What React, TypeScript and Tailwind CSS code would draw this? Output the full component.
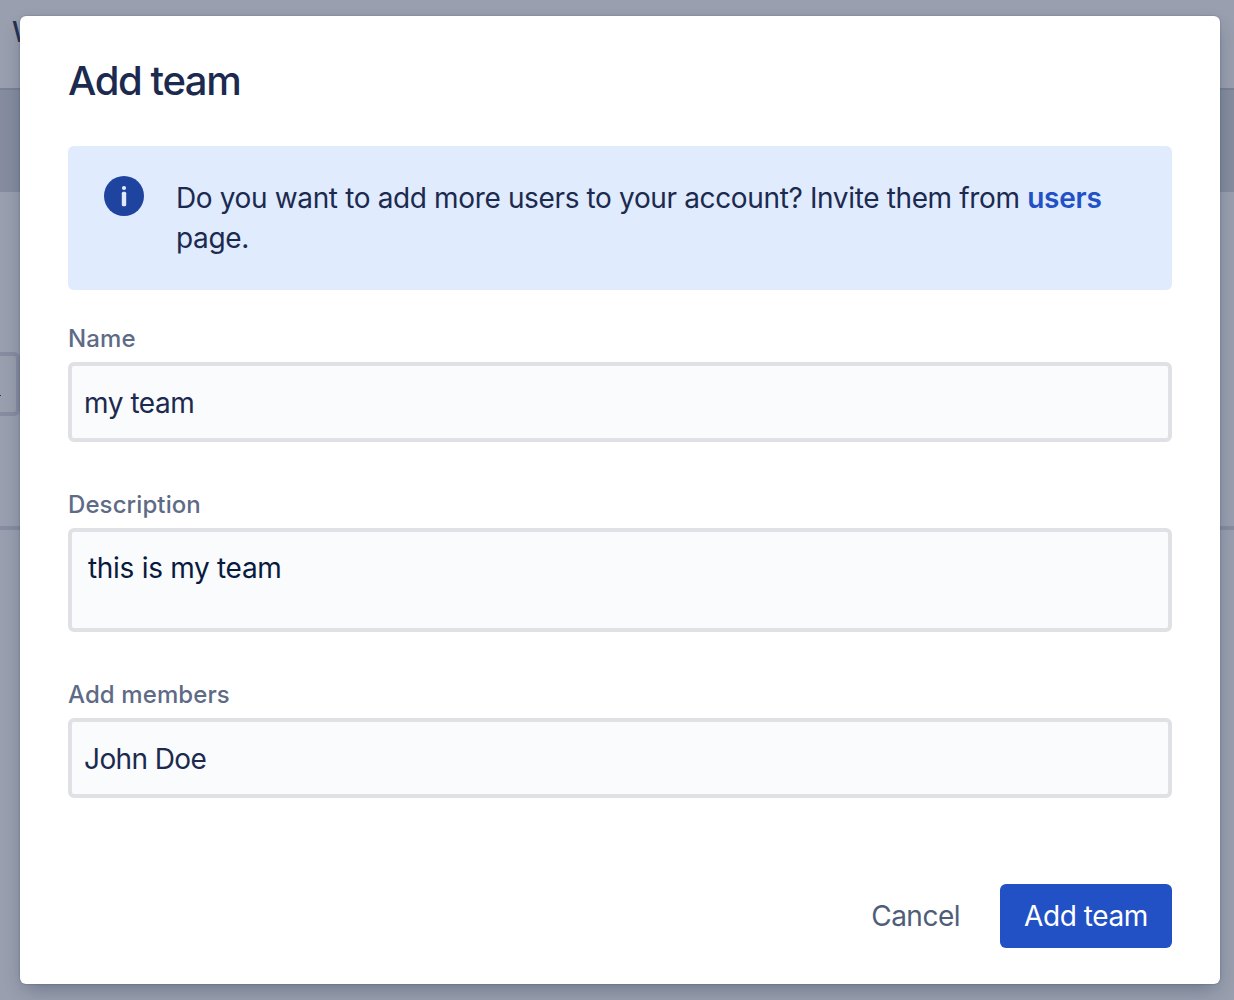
import React from "react";

function Backdrop() {
  return (
    <div className="flex h-full flex-col bg-[#999fae]" aria-hidden="true">
      <header className="h-[90px] border-b-2 border-[#7b8294] pt-[11px] pl-3 text-[28px] leading-[42px] font-medium text-[#253253] shadow-[0_2px_4px_#7b829455]">
        W
      </header>
      <div className="h-[102px] bg-[#858c9e]" />
      <div className="mt-40 flex h-16 w-5 items-center rounded-r-md border-4 border-l-0 border-[#868da0]">
        <span className="mt-[22px] size-px bg-[#253253]" />
      </div>
      <div className="mt-[110px] h-1 bg-[#868da0]" />
    </div>
  );
}

function Field({ label, children }: { label: string; children: React.ReactNode }) {
  return (
    <label className="flex flex-col text-[24px] leading-8 font-medium tracking-[0.1px] text-[#5e6b86]">
      <span className="mt-px mb-[7px]">{label}</span>
      {children}
    </label>
  );
}

function InfoIcon() {
  return (
    <svg className="size-10 shrink-0" viewBox="0 0 40 40">
      <circle cx="20" cy="20" r="20" fill="#1e449f" />
      <circle cx="20" cy="12" r="2.1" fill="#e0ebfd" />
      <rect x="17.8" y="15.8" width="4.4" height="14.4" rx="1.5" fill="#e0ebfd" />
    </svg>
  );
}

const control =
  "block w-full resize-none rounded-md border-4 border-[#dfe1e5] bg-[#fafbfd] text-[28px] font-normal outline-none";

export default function App() {
  return (
    <div className="relative h-[1000px] w-full overflow-hidden font-['Inter',sans-serif]">
      <Backdrop />
      <div className="absolute inset-0 px-5 pt-4 pr-3.5">
        <section className="flex h-[968px] w-[1200px] flex-col rounded-md bg-white px-12 text-[#1b2a4e] shadow-[0_0_2px_#091e4255,0_8px_20px_-4px_#091e4255]">
          <h1 className="mt-10 text-[40px] leading-[50px] font-medium tracking-[-1.4px]">Add team</h1>
          <div className="mt-10 flex h-36 rounded-md bg-[#e0ebfd] pt-[30px] pl-9">
            <InfoIcon />
            <p className="ml-8 w-[940px] pt-0.5 text-[28px] leading-10 tracking-[-0.36px]">
              Do you want to add more users to your account? Invite them from{" "}
              <a className="font-semibold tracking-[-0.2px] text-[#2250c5]">users</a> page.
            </p>
          </div>
          <form className="mt-8 flex flex-col">
            <Field label="Name">
              <input
                className={`${control} h-20 px-3 pt-0.5 tracking-[-0.45px] text-[#1b2a4e]`}
                defaultValue="my team"
              />
            </Field>
            <div className="mt-[46px]">
              <Field label="Description">
                <textarea
                  className={`${control} h-[104px] px-4 pt-4 leading-10 tracking-[-0.3px] text-[#081a3d]`}
                  defaultValue="this is my team"
                />
              </Field>
            </div>
            <div className="mt-[46px]">
              <Field label="Add members">
                <input
                  className={`${control} h-20 px-3 pt-0.5 tracking-[-0.6px] text-[#1b2a4e]`}
                  defaultValue="John Doe"
                />
              </Field>
            </div>
          </form>
          <footer className="mt-[86px] flex items-center justify-end gap-10 text-[28px]">
            <button className="tracking-[-0.5px] text-[#505d79]">Cancel</button>
            <button className="h-16 w-[172px] rounded-md bg-[#2250c5] tracking-[-0.4px] text-white">
              Add team
            </button>
          </footer>
        </section>
      </div>
    </div>
  );
}
